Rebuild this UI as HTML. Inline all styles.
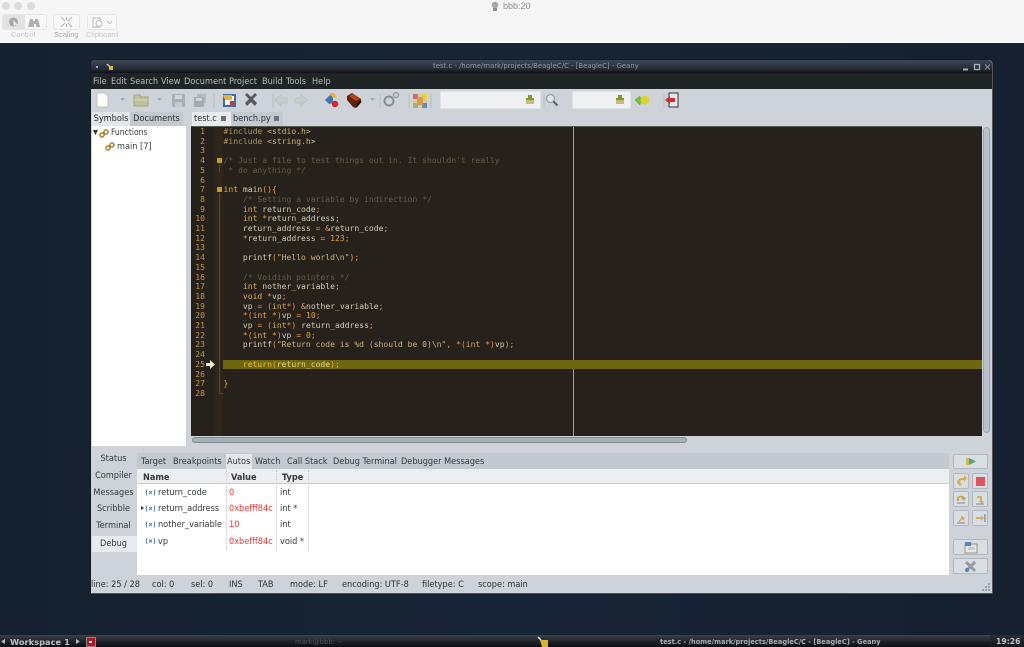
<!DOCTYPE html>
<html><head><meta charset="utf-8"><style>
html,body{margin:0;padding:0;width:1024px;height:647px;overflow:hidden;background:#14202f}
*{box-sizing:border-box}
#w{position:absolute;left:0;top:0;width:1024px;height:647px;overflow:hidden;filter:blur(.3px);font-family:"DejaVu Sans Condensed","DejaVu Sans","Liberation Sans",sans-serif;font-stretch:condensed;font-size:9px;color:#2a2e30}
.a{position:absolute;white-space:pre}
.ln{position:absolute;left:191px;width:14px;top:127px;text-align:right;font:8.06px/9.7px "DejaVu Sans Mono",monospace;color:#c0992c;white-space:pre}
pre{margin:0}
#code{position:absolute;left:223.5px;top:127px;font:8.06px/9.7px "DejaVu Sans Mono",monospace;color:#d2ccb6;z-index:3}
.k{color:#e0aa45}.o{color:#ee9a3e}.c{color:#635e48}.n{color:#dca232}.s{color:#ceb478}.p{color:#a89a5a}
.tab{position:absolute;top:112px;height:14px;background:#c2c9cf;text-align:center;line-height:14px;font-size:9.100px;white-space:pre}
.btn{position:absolute;background:#d9dee2;border:1px solid #b2b9be;border-radius:2px}
.mi{position:absolute;top:76.500px;font-size:9.100px;color:#b9bcbd;white-space:pre}
.sb{position:absolute;top:579.500px;font-size:9.100px;color:#2c3032;white-space:pre}
.t2{position:absolute;top:456px;height:12px;font-size:9.100px;line-height:12px;color:#33373a;white-space:pre}
.side{position:absolute;left:92px;width:43px;text-align:center;font-size:9.100px;color:#33373a}
.cell{position:absolute;font-size:9.100px;white-space:pre;color:#33373a}
.r{color:#f32f2f}
</style></head><body><div id="w">

<!-- mac top bar -->
<div class="a" style="left:0;top:0;width:1024px;height:43px;background:#f6f6f6;border-bottom:1px solid #fff"></div>
<div class="a" style="left:2px;top:2px;width:8px;height:8px;border-radius:50%;background:#dcdcdc"></div>
<div class="a" style="left:14px;top:2px;width:8px;height:8px;border-radius:50%;background:#dcdcdc"></div>
<div class="a" style="left:27px;top:2px;width:8px;height:8px;border-radius:50%;background:#dcdcdc"></div>
<div class="a" style="left:503px;top:1px;font:9px 'Liberation Sans',sans-serif;color:#8b8b8b">bbb:20</div>
<svg class="a" style="left:490px;top:1px" width="10" height="11"><circle cx="5" cy="4" r="3.2" fill="#a5a5a5"/><rect x="3" y="7" width="4" height="3" fill="#8f8f8f"/></svg>
<div class="a" style="left:2px;top:14px;width:45px;height:16px;border:1px solid #e6e6e6;border-radius:3px;background:#f8f8f8"></div>
<div class="a" style="left:3px;top:15px;width:22px;height:14px;background:#e2e2e2;border-radius:2px 0 0 2px"></div>
<svg class="a" style="left:8px;top:16px" width="36" height="12"><circle cx="5.500" cy="6" r="4.500" fill="#a8a8a8"/><path d="M5 4l5 5-3 0-1 2z" fill="#eee"/><path d="M22 3h3v2h2V3h3l2 8h-4V8h-2v3h-6z" fill="#b0b0b0"/></svg>
<div class="a" style="left:53px;top:14px;width:27px;height:16px;border:1px solid #e6e6e6;border-radius:3px;background:#f8f8f8"></div>
<svg class="a" style="left:60px;top:16px" width="13" height="12" stroke="#b3b3b3" fill="none"><path d="M1 1l4 4M12 1L8 5M1 11l4-4M12 11L8 7M6.500 1v3M6.500 8v3"/></svg>
<div class="a" style="left:87px;top:14px;width:30px;height:16px;border:1px solid #e6e6e6;border-radius:3px;background:#f8f8f8"></div>
<svg class="a" style="left:92px;top:16px" width="22" height="12" stroke="#bdbdbd" fill="none"><rect x="1" y="2" width="7" height="9"/><circle cx="7" cy="7.500" r="3" fill="#f8f8f8"/><path d="M15 5l2.500 2.500L20 5"/></svg>
<div class="a" style="left:11px;top:30px;font:7.500px 'Liberation Sans',sans-serif;color:#c9c9c9">Control</div>
<div class="a" style="left:54px;top:30px;font:7.500px 'Liberation Sans',sans-serif;color:#ababab">Scaling</div>
<div class="a" style="left:86px;top:30px;font:7.500px 'Liberation Sans',sans-serif;color:#c9c9c9">Clipboard</div>

<!-- desktop shading -->
<div class="a" style="left:0;top:43px;width:1024px;height:592px;background:linear-gradient(90deg,#15212f,#182536 50%,#16202f)"></div>

<!-- window -->
<div class="a" style="left:91px;top:60px;width:902px;height:534px;background:#cdd3d9;border-radius:4px 4px 0 0;box-shadow:0 0 1px #000;border-right:1px solid #555;border-bottom:1px solid #555"></div>
<div class="a" style="left:91px;top:60px;width:901px;height:13px;background:linear-gradient(#3c4656,#252c38 70%,#0e1014);border-radius:4px 4px 0 0"></div>
<div class="a" style="left:91px;top:73px;width:901px;height:16px;background:#1f2426"></div>
<div class="a" style="left:433px;top:62px;font-family:'DejaVu Sans',sans-serif;font-stretch:normal;font-size:6.900px;color:#8f98a4">test.c - /home/mark/projects/BeagleC/C - [BeagleC] - Geany</div>
<div class="a" style="left:96px;top:66px;width:2px;height:2px;background:#aab"></div>
<svg class="a" style="left:106px;top:63px" width="8" height="8"><path d="M1 1l2 1 1 1h3v4H3V4z" fill="#e0b53c"/><path d="M1 1l2 2" stroke="#fff"/></svg>
<svg class="a" style="left:961px;top:63px" width="29" height="8" stroke="#a9b0b8" fill="none"><path d="M2 6.500h5" stroke-width="2"/><rect x="13.500" y="1.500" width="5" height="5" stroke-width="1.300"/><path d="M24 1.500l5 5M29 1.500l-5 5" stroke="#8b929a"/></svg>

<!-- menu -->
<div class="mi" style="left:93px">File</div><div class="mi" style="left:111px">Edit</div><div class="mi" style="left:130px">Search</div><div class="mi" style="left:161px">View</div><div class="mi" style="left:184px">Document</div><div class="mi" style="left:229px">Project</div><div class="mi" style="left:262px">Build</div><div class="mi" style="left:286px">Tools</div><div class="mi" style="left:312px">Help</div>

<!-- toolbar -->
<svg class="a" style="left:91px;top:89px" width="901" height="22">
<path d="M6 4h8l3 3v11H6z" fill="#fbfbf8" stroke="#c4c4bc"/><path d="M29 9l2.500 3 2.500-3z" fill="#a6acb0"/>
<path d="M43 6h6l1 2h7v9H43z" fill="#bfc19a" stroke="#a3a57f"/><path d="M43 11h14" stroke="#d8d8b8"/><path d="M66 9l2.500 3 2.500-3z" fill="#a6acb0"/>
<rect x="81" y="5" width="13" height="13" rx="1" fill="#a9b0b5"/><rect x="84" y="6" width="7" height="4" fill="#d0d5d8"/><rect x="84" y="13" width="7" height="5" fill="#c4cacd"/>
<rect x="106" y="5" width="9" height="9" fill="#b3b9bd"/><rect x="103" y="8" width="10" height="10" fill="#a5acb1"/><rect x="105" y="9" width="6" height="3" fill="#cfd4d7"/>
<path d="M123 5v14M182 5v14M262 5v14M289 5v14M318 5v14M340 5v14M453 5v14M573 5v14" stroke="#b8bec3"/>
<rect x="132" y="5" width="13" height="13" fill="#3b6ea8"/><rect x="134" y="7" width="9" height="9" fill="#f5f5f0"/><path d="M132 6h9v5h-7z" fill="#e8b13a"/><rect x="139" y="12" width="4" height="5" fill="#d33"/>
<path d="M154 6l2-2 4 4 4-4 2 2-4 4 4 4-2 3-4-4-4 4-2-3 4-4z" fill="#565a5c"/>
<path d="M184 11l6-5v3h6v5h-6v3z" fill="#c6cfcc" stroke="#bac3c0"/>
<path d="M216 11l-6-5v3h-6v5h6v3z" fill="#c6cfcc" stroke="#bac3c0"/>
<path d="M234 11l5-5 3 2v6l-4 1z" fill="#3f74b4"/><path d="M238 4h5l3 4-4 1z" fill="#e9b13c"/><circle cx="244" cy="15" r="3.200" fill="#e02020"/>
<path d="M256 7l5-3 9 6v3l-5 6-3-1-6-7z" fill="#5f2408"/><path d="M258 7l4-2 7 5-4 2z" fill="#b8450f"/><path d="M265 18l5-6" stroke="#2b1003" stroke-width="2"/><path d="M279 9l2.500 3 2.500-3z" fill="#a6acb0"/>
<circle cx="298" cy="12" r="4.500" fill="none" stroke="#8a8e90" stroke-width="2"/><circle cx="305" cy="6" r="2.500" fill="none" stroke="#9b9ea0" stroke-width="1.500"/>
<rect x="322" y="5" width="14" height="14" fill="#d8c9a0"/><rect x="322" y="5" width="5" height="5" fill="#d86a6a"/><rect x="331" y="5" width="5" height="5" fill="#e8d23a"/><rect x="322" y="14" width="5" height="5" fill="#8dbd78"/><rect x="331" y="14" width="5" height="5" fill="#5a8ec8"/><rect x="326" y="8" width="6" height="8" fill="#d89a50"/>
<path d="M544 11l5-4v2h4v5h-4v2z" fill="#6cc23a" stroke="#5a9a34" stroke-width=".5"/><circle cx="554" cy="11" r="4.500" fill="#e3d02c"/>
<rect x="578" y="4" width="9" height="14" fill="#e8e8e8" stroke="#333"/><path d="M574 11l5-4v2h5v4h-5v2z" fill="#d42a2a"/>
</svg>
<div class="a" style="left:440px;top:91px;width:101px;height:18px;background:#eef0f1;border:1px solid #dfe3e6;border-radius:2px"></div>
<div class="a" style="left:572px;top:91px;width:59px;height:18px;background:#eef0f1;border:1px solid #dfe3e6;border-radius:2px"></div>
<svg class="a" style="left:524px;top:94px" width="12" height="12"><rect x="4" y="1" width="4" height="3" fill="#7f9a2e"/><path d="M2 4h8v2H2z" fill="#7f9a2e"/><rect x="2" y="6" width="8" height="4" fill="#c9bb78"/></svg>
<svg class="a" style="left:614px;top:94px" width="12" height="12"><rect x="4" y="1" width="4" height="3" fill="#7f9a2e"/><path d="M2 4h8v2H2z" fill="#7f9a2e"/><rect x="2" y="6" width="8" height="4" fill="#c9bb78"/></svg>
<svg class="a" style="left:545px;top:93px" width="14" height="14" fill="none"><circle cx="5.500" cy="5.500" r="4" stroke="#9aa0a4" stroke-width="1.300" fill="#e3e6e8"/><path d="M8.500 8.500l4 4" stroke="#5f6366" stroke-width="2"/></svg>

<!-- left tabs -->
<div class="tab" style="left:92px;width:38px;background:#e4e7ea">Symbols</div>
<div class="tab" style="left:130px;width:53px">Documents</div>
<div class="a" style="left:92px;top:126px;width:94px;height:320px;background:#fff"></div>
<svg class="a" style="left:93px;top:129px" width="30" height="22"><path d="M0 1h5L2.500 6z" fill="#333"/><g fill="none" stroke="#c9a02a" stroke-width="1.500"><circle cx="9" cy="6" r="1.800"/><circle cx="13" cy="3" r="1.800"/></g><g fill="none" stroke="#555" stroke-width=".5"><circle cx="9" cy="6" r="2.500"/><circle cx="13" cy="3" r="2.500"/></g><g fill="none" stroke="#c9a02a" stroke-width="1.500"><circle cx="15" cy="19" r="1.800"/><circle cx="19" cy="16" r="1.800"/></g><g fill="none" stroke="#555" stroke-width=".5"><circle cx="15" cy="19" r="2.500"/><circle cx="19" cy="16" r="2.500"/></g></svg>
<div class="a" style="left:111px;top:127.500px;font-size:8.500px;color:#3a3e40">Functions</div>
<div class="a" style="left:117px;top:141.500px;font-size:9.100px;color:#3a3e40">main [7]</div>

<!-- doc tabs -->
<div class="tab" style="left:192px;width:39px;background:#e8ebed;text-align:left;padding-left:2px">test.c</div>
<div class="tab" style="left:231px;width:52px;text-align:left;padding-left:2px">bench.py</div>
<svg class="a" style="left:221px;top:116px" width="62" height="6"><rect x="0" y="0" width="5" height="5" fill="#6a6e70"/><rect x="53" y="0" width="5" height="5" fill="#6f7375"/></svg>

<!-- editor -->
<div class="a" style="left:191px;top:126px;width:791px;height:310px;background:#26211a;border-top:1px solid #5a5a55"></div>
<div class="a" style="left:215px;top:127px;width:8px;height:309px;background:#2e2719"></div>
<div class="a" style="left:573px;top:127px;width:1px;height:309px;background:#9aa890"></div>
<div class="a" style="left:223px;top:360px;width:759px;height:9px;background:#6f6610;z-index:1"></div>
<div class="a" style="left:219px;top:164px;width:1px;height:8px;background:#5a4a20"></div>
<div class="a" style="left:219px;top:193px;width:1px;height:201px;background:#5a4a20"></div>
<div class="a" style="left:219px;top:393px;width:4px;height:1px;background:#5a4a20"></div>
<div class="a" style="left:217px;top:158px;width:5px;height:5px;background:#c49a28"></div>
<div class="a" style="left:217px;top:187px;width:5px;height:5px;background:#c49a28"></div>
<svg class="a" style="left:206px;top:360px;z-index:2" width="10" height="9"><path d="M0 3h4V0l5 4.500L4 9V6H0z" fill="#f5e6c0"/></svg>
<pre class="ln">1
2
3
4
5
6
7
8
9
10
11
12
13
14
15
16
17
18
19
20
21
22
23
24
25
26
27
28</pre>
<pre id="code"><span class="p">#include</span> <span class="s">&lt;stdio.h&gt;</span>
<span class="p">#include</span> <span class="s">&lt;string.h&gt;</span>

<span class="c">/* Just a file to test things out in. It shouldn't really</span>
<span class="c"> * do anything */</span>

<span class="k">int</span> main<span class="o">(){</span>
    <span class="c">/* Setting a variable by indirection */</span>
    <span class="k">int</span> return_code<span class="o">;</span>
    <span class="k">int</span> <span class="o">*</span>return_address<span class="o">;</span>
    return_address <span class="o">=</span> <span class="o">&amp;</span>return_code<span class="o">;</span>
    <span class="o">*</span>return_address <span class="o">=</span> <span class="n">123</span><span class="o">;</span>

    printf<span class="o">(</span><span class="s">"Hello world\n"</span><span class="o">);</span>

    <span class="c">/* Voidish pointers */</span>
    <span class="k">int</span> nother_variable<span class="o">;</span>
    <span class="k">void</span> <span class="o">*</span>vp<span class="o">;</span>
    vp <span class="o">=</span> <span class="o">(</span><span class="k">int</span><span class="o">*)</span> <span class="o">&amp;</span>nother_variable<span class="o">;</span>
    <span class="o">*(</span><span class="k">int</span> <span class="o">*)</span>vp <span class="o">=</span> <span class="n">10</span><span class="o">;</span>
    vp <span class="o">=</span> <span class="o">(</span><span class="k">int</span><span class="o">*)</span> return_address<span class="o">;</span>
    <span class="o">*(</span><span class="k">int</span> <span class="o">*)</span>vp <span class="o">=</span> <span class="n">0</span><span class="o">;</span>
    printf<span class="o">(</span><span class="s">"Return code is %d (should be 0)\n"</span><span class="o">,</span> <span class="o">*(</span><span class="k">int</span> <span class="o">*)</span>vp<span class="o">);</span>

    <span style="color:#f0c020">return</span><span style="color:#f0b030">(</span><span style="color:#ecd878">return_code</span><span style="color:#f0b030">);</span>

<span class="o">}</span>
</pre>
<!-- scrollbars -->
<div class="a" style="left:982px;top:127px;width:9px;height:309px;background:#cdd3d9"></div>
<div class="a" style="left:983px;top:127px;width:7px;height:306px;background:#b6c2c8;border:1px solid #98a4aa;border-radius:4px"></div>
<div class="a" style="left:191px;top:436px;width:800px;height:8px;background:#cdd3d9"></div>
<div class="a" style="left:192px;top:437px;width:495px;height:6px;background:#a7b2b8;border:1px solid #7f8a91;border-radius:3px"></div>

<!-- bottom panel -->
<div class="side" style="top:454px">Status</div>
<div class="side" style="top:471px">Compiler</div>
<div class="side" style="top:488px">Messages</div>
<div class="side" style="top:504px">Scribble</div>
<div class="a" style="left:92px;top:536px;width:45px;height:16px;background:#e8ebed"></div>
<div class="side" style="top:521px">Terminal</div>
<div class="side" style="top:539px">Debug</div>
<div class="a" style="left:137px;top:453px;width:812px;height:16px;background:#c2c9cf"></div>
<div class="a" style="left:226px;top:454px;width:26px;height:15px;background:#e4e7ea"></div>
<div class="t2" style="left:141px">Target</div><div class="t2" style="left:173px">Breakpoints</div><div class="t2" style="left:227px">Autos</div><div class="t2" style="left:255px">Watch</div><div class="t2" style="left:287px">Call Stack</div><div class="t2" style="left:333px">Debug Terminal</div><div class="t2" style="left:401px">Debugger Messages</div>
<div class="a" style="left:137px;top:469px;width:812px;height:106px;background:#fff"></div>
<div class="a" style="left:137px;top:469px;width:812px;height:15px;background:#eceef0;border-bottom:1px solid #c8cdd1"></div>
<div class="cell" style="left:143px;top:473px;font-weight:bold">Name</div>
<div class="cell" style="left:231px;top:473px;font-weight:bold">Value</div>
<div class="cell" style="left:282px;top:473px;font-weight:bold">Type</div>
<div class="a" style="left:226px;top:470px;width:1px;height:80px;border-left:1px dotted #c4c9cd"></div>
<div class="a" style="left:276px;top:470px;width:1px;height:80px;border-left:1px dotted #c4c9cd"></div>
<div class="a" style="left:308px;top:470px;width:1px;height:80px;border-left:1px dotted #c4c9cd"></div>
<div class="cell" style="left:158px;top:488px">return_code</div><div class="cell r" style="left:229px;top:488px">0</div><div class="cell" style="left:280px;top:488px">int</div>
<div class="cell" style="left:158px;top:504px">return_address</div><div class="cell r" style="left:229px;top:504px">0xbefff84c</div><div class="cell" style="left:280px;top:504px">int *</div>
<div class="cell" style="left:158px;top:520px">nother_variable</div><div class="cell r" style="left:229px;top:520px">10</div><div class="cell" style="left:280px;top:520px">int</div>
<div class="cell" style="left:158px;top:537px">vp</div><div class="cell r" style="left:229px;top:537px">0xbefff84c</div><div class="cell" style="left:280px;top:537px">void *</div>
<svg class="a" style="left:140px;top:488px" width="16" height="60" stroke="#5f7fa8" fill="none"><path d="M7 1.500Q5.500 4.500 7 7.500M14 1.500Q15.500 4.500 14 7.500"/><path d="M9 3l3 3M12 3l-3 3"/><path d="M7 17.500Q5.500 20.500 7 23.500M14 17.500Q15.500 20.500 14 23.500M9 19l3 3M12 19l-3 3"/><path d="M7 33.500Q5.500 36.500 7 39.500M14 33.500Q15.500 36.500 14 39.500M9 35l3 3M12 35l-3 3"/><path d="M7 50Q5.500 53 7 56M14 50Q15.500 53 14 56M9 51.500l3 3M12 51.500l-3 3"/><path d="M1 18v4l3-2z" fill="#333" stroke="none"/></svg>

<!-- debug buttons -->
<div class="btn" style="left:953px;top:454px;width:35px;height:15px"></div>
<div class="btn" style="left:953px;top:473px;width:16px;height:16px"></div>
<div class="btn" style="left:972px;top:473px;width:16px;height:16px"></div>
<div class="btn" style="left:953px;top:491px;width:16px;height:16px"></div>
<div class="btn" style="left:972px;top:491px;width:16px;height:16px"></div>
<div class="btn" style="left:953px;top:510px;width:16px;height:16px"></div>
<div class="btn" style="left:972px;top:510px;width:16px;height:16px"></div>
<div class="btn" style="left:953px;top:539px;width:35px;height:16px"></div>
<div class="btn" style="left:953px;top:558px;width:35px;height:16px"></div>
<svg class="a" style="left:953px;top:454px;opacity:.85" width="36" height="121">
<rect x="13" y="4" width="3" height="7" fill="#d6b04a"/><path d="M16 4l7 3.500-7 3.500z" fill="#3f9a58"/>
<path d="M4 27l3-3h4v-3l3 3-3 4v-2H8l-1 3 2 1-2 2-3-3z" fill="#d9a63f"/>
<rect x="23" y="23" width="9" height="9" fill="#e23b48"/>
<path d="M4 44c1-3 7-3 8 0l1 0-2 3-3-3h1c-1-1-2-1-3 0v3H4z" fill="#c99a3f"/><path d="M4 49h8" stroke="#6d7a88"/>
<path d="M24 42h5v5h2l-2 3-3-3h1v-3h-3z" fill="#d6a440"/><path d="M23 50h8" stroke="#6d7a88"/>
<path d="M5 68l3-4v-2l1 0 3 2-2 3-1-2-2 3z" fill="#d6a440"/><path d="M4 69h8" stroke="#6d7a88"/>
<path d="M23 63h5v-2l3 3-3 3v-2h-5z" fill="#d6a440"/><path d="M32 60v8" stroke="#6d8fb8" stroke-width="1.500"/>
<rect x="12" y="90" width="12" height="9" fill="#e9ecee" stroke="#8d8462"/><rect x="12" y="88" width="6" height="4" fill="#3f78b0"/><rect x="15" y="93" width="7" height="3" fill="#b9cde0"/>
<path d="M13 108l9 9M22 108l-9 9" stroke="#8c9094" stroke-width="3"/><circle cx="14" cy="116" r="2" fill="#3f78c0"/>
</svg>

<!-- status -->
<div class="sb" style="left:91px">line: 25 / 28</div><div class="sb" style="left:152px">col: 0</div><div class="sb" style="left:191px">sel: 0</div><div class="sb" style="left:229px">INS</div><div class="sb" style="left:258px">TAB</div><div class="sb" style="left:290px">mode: LF</div><div class="sb" style="left:342px">encoding: UTF-8</div><div class="sb" style="left:422px">filetype: C</div><div class="sb" style="left:478px">scope: main</div>
<svg class="a" style="left:982px;top:583px" width="9" height="9" fill="#9aa0a5"><rect x="6" y="0" width="2" height="2"/><rect x="3" y="3" width="2" height="2"/><rect x="6" y="3" width="2" height="2"/><rect x="0" y="6" width="2" height="2"/><rect x="3" y="6" width="2" height="2"/><rect x="6" y="6" width="2" height="2"/></svg>

<!-- taskbar -->
<div class="a" style="left:0;top:635px;width:1024px;height:12px;background:linear-gradient(#3a4148,#1b1f25 60%,#0c0e12)"></div>
<div class="a" style="left:10px;top:637px;font-family:'DejaVu Sans',sans-serif;font-stretch:normal;font-size:8.300px;font-weight:bold;color:#bfc4c8">Workspace 1</div>
<svg class="a" style="left:0;top:638px" width="84" height="7" fill="#b5babd"><path d="M5 1v5L1 3.500z"/><path d="M76 1v5l4-2.500z"/></svg>
<div class="a" style="left:86px;top:637px;width:10px;height:10px;background:#b01818;border:1px solid #888"></div>
<div class="a" style="left:89px;top:641px;width:3px;height:2px;background:#fff"></div>
<div class="a" style="left:295px;top:638px;font-family:'DejaVu Sans',sans-serif;font-stretch:normal;font-size:6.900px;color:#4d5359">mark@bbb: ~</div>
<svg class="a" style="left:537px;top:636px" width="13" height="11"><path d="M3 4h8v7H5z" fill="#dcb22c"/><path d="M1 1l3 3" stroke="#fff" stroke-width="1.500"/></svg>
<div class="a" style="left:660px;top:637.500px;font-family:'DejaVu Sans',sans-serif;font-stretch:normal;font-size:6.640px;font-weight:bold;color:#a9b0b6">test.c - /home/mark/projects/BeagleC/C - [BeagleC] - Geany</div>
<div class="a" style="left:990px;top:635px;width:34px;height:12px;background:linear-gradient(#2a2f35,#14171b)"></div>
<div class="a" style="left:996px;top:637px;font-family:'DejaVu Sans',sans-serif;font-stretch:normal;font-size:7.700px;font-weight:bold;color:#c0c5c9">19:26</div>
</div></body></html>
